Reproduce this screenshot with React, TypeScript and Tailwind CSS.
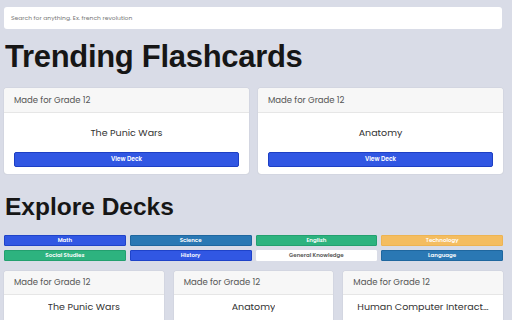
import React from "react";

const trending = [{ title: "The Punic Wars" }, { title: "Anatomy" }];

const categories = [
  { name: "Math", cls: "bg-[#3157e3] border-[#1f43c9] text-white" },
  { name: "Science", cls: "bg-[#2a78b4] border-[#1f679f] text-white" },
  { name: "English", cls: "bg-[#2db37f] border-[#23a06f] text-white" },
  { name: "Technology", cls: "bg-[#f4bd60] border-[#eeb452] text-white" },
  { name: "Social Studies", cls: "bg-[#2db37f] border-[#23a06f] text-white" },
  { name: "History", cls: "bg-[#3157e3] border-[#1f43c9] text-white" },
  { name: "General Knowledge", cls: "bg-white border-white text-[#555] font-normal" },
  { name: "Language", cls: "bg-[#2a78b4] border-[#1f679f] text-white" },
];

const explore = ["The Punic Wars", "Anatomy", "Human Computer Interaction"];

const body = { fontFamily: "Poppins, 'Open Sans', 'Noto Sans', sans-serif" };
const head = { fontFamily: "'Liberation Sans', Arial, sans-serif" };

export default function App() {
  return (
    <div className="min-h-screen bg-[#d9dce7] px-1 pt-[7px] overflow-hidden" style={body}>
      <div className="h-[22px] w-[498px] bg-white rounded-[3px] flex items-center px-[7px]">
        <span className="text-[6px] text-[#777]">Search for anything. Ex. french revolution</span>
      </div>

      <h1 className="text-[31px] leading-none font-bold text-[#161616] mt-[12px] ml-px tracking-[-0.3px]" style={head}>
        Trending Flashcards
      </h1>

      <div className="grid grid-cols-2 gap-[9px] mt-[16px] w-[499px]">
        {trending.map((d, i) => (
          <div key={i} className="bg-white rounded-[3px] shadow-[0_0_1px_rgba(0,0,0,0.25)] overflow-hidden">
            <div className="h-[25px] bg-[#f7f7f7] border-b border-[#e6e6e6] flex items-center px-[10px]">
              <span className="text-[8.5px] text-[#555]">Made for Grade 12</span>
            </div>
            <div className="px-[10px] pt-[15px] pb-[7px] flex flex-col items-center">
              <p className="text-[9.5px] text-[#333] leading-none">{d.title}</p>
              <button className="mt-[14.5px] w-full h-[15px] bg-[#3157e3] border border-[#1d3fc4] rounded-[2px] text-white text-[6px] font-semibold flex items-center justify-center">
                View Deck
              </button>
            </div>
          </div>
        ))}
      </div>

      <h2 className="text-[24.5px] leading-none font-bold text-[#161616] mt-[21px] ml-px" style={head}>
        Explore Decks
      </h2>

      <div className="grid grid-cols-4 gap-x-[4px] gap-y-[4px] mt-[15.5px] w-[499px]">
        {categories.map((c) => (
          <button
            key={c.name}
            className={`h-[11px] border rounded-[1px] text-[5.5px] font-semibold flex items-center justify-center ${c.cls}`}
          >
            {c.name}
          </button>
        ))}
      </div>

      <div className="grid grid-cols-3 gap-[10px] mt-[10px] w-[499px]">
        {explore.map((t, i) => (
          <div key={i} className="bg-white rounded-[3px] shadow-[0_0_1px_rgba(0,0,0,0.25)] overflow-hidden h-[60px]">
            <div className="h-[24px] bg-[#f7f7f7] border-b border-[#e6e6e6] flex items-center px-[10px]">
              <span className="text-[8.5px] text-[#555]">Made for Grade 12</span>
            </div>
            <div className="px-[14px] pt-[7px] flex justify-center">
              <p className="text-[9.5px] text-[#333] leading-none truncate">{t}</p>
            </div>
          </div>
        ))}
      </div>
    </div>
  );
}
